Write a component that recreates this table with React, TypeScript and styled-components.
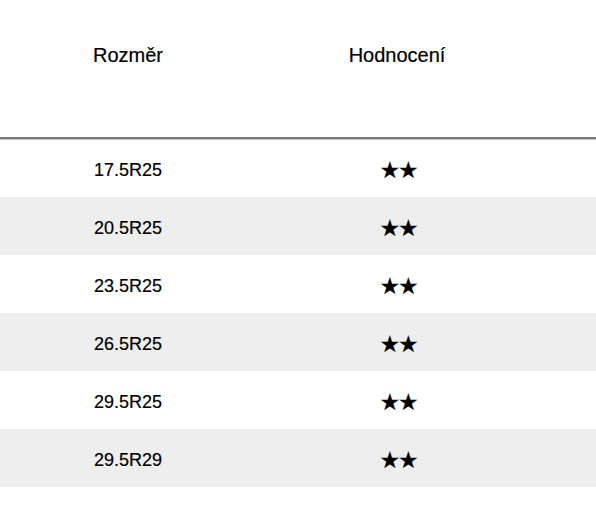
import React from "react";
import styled, { createGlobalStyle } from "styled-components";

const Global = createGlobalStyle`
  html, body { margin: 0; padding: 0; background: #ffffff; }
  body { font-family: "Liberation Sans", Arial, sans-serif; color: #000000; }
`;

const Table = styled.div`
  width: 596px;
  display: grid;
  grid-template-columns: 256px 282px 58px;
`;

const HeadCell = styled.div`
  height: 137px;
  box-sizing: border-box;
  padding-top: 43px;
  display: flex;
  justify-content: center;
  align-items: flex-start;
  font-size: 20px;
  line-height: 24px;
  -webkit-text-stroke: 0.2px #000000;
`;

const HeadRule = styled.div`
  grid-column: 1 / -1;
  height: 2px;
  background: #7a7a7a;
  box-shadow: 0 1px 0 #c4c4c4;
  position: relative;
  z-index: 1;
`;

const Cell = styled.div<{ $shaded: boolean }>`
  height: 58px;
  box-sizing: border-box;
  padding-top: 4px;
  display: flex;
  align-items: center;
  justify-content: center;
  background: ${(p) => (p.$shaded ? "#eeeeee" : "#ffffff")};
  font-size: 18px;
  line-height: 22px;
  -webkit-text-stroke: 0.2px #000000;
`;

const Stars = styled.span`
  font-family: "DejaVu Sans", sans-serif;
  font-size: 23px;
  line-height: 22px;
  letter-spacing: -2px;
  margin-right: -2px;
  color: #000000;
`;

const rows = ["17.5R25", "20.5R25", "23.5R25", "26.5R25", "29.5R25", "29.5R29"];

export default function App() {
  return (
    <>
      <Global />
      <Table>
        <HeadCell>Rozměr</HeadCell>
        <HeadCell>Hodnocení</HeadCell>
        <HeadCell />
        <HeadRule />
        {rows.map((r, i) => (
          <React.Fragment key={r + i}>
            <Cell $shaded={i % 2 === 1}>{r}</Cell>
            <Cell $shaded={i % 2 === 1}>
              <Stars>★★</Stars>
            </Cell>
            <Cell $shaded={i % 2 === 1} />
          </React.Fragment>
        ))}
      </Table>
    </>
  );
}
